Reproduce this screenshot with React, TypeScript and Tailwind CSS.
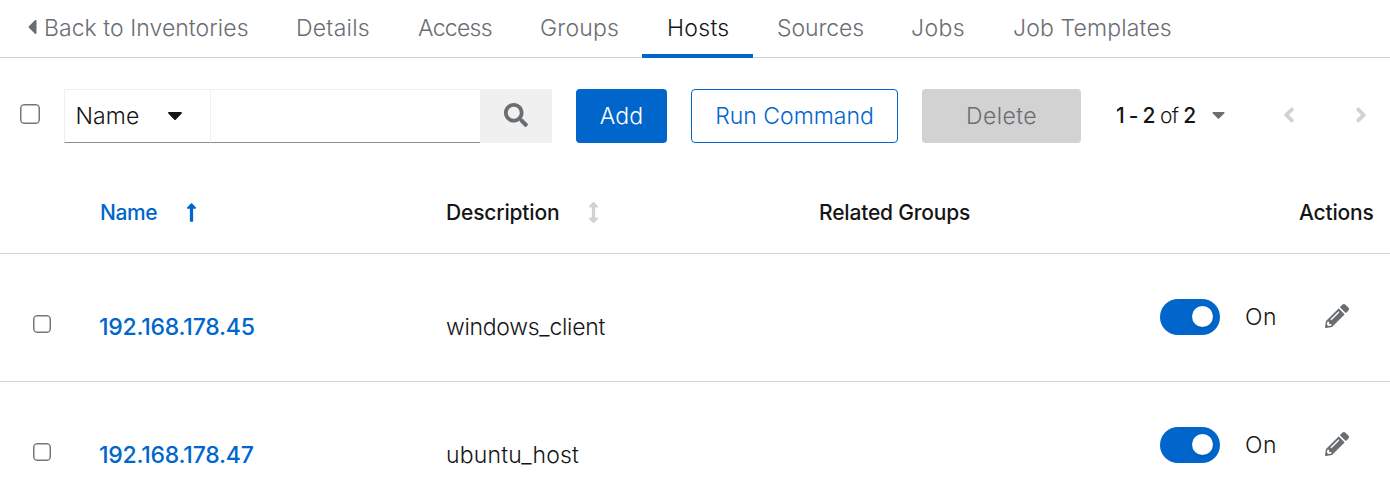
import { FaCaretLeft, FaCaretDown, FaSearch, FaLongArrowAltUp, FaArrowsAltV, FaAngleLeft, FaAngleRight, FaPencilAlt } from "react-icons/fa";

const tabs = [
  { label: "Details", box: "w-[122px] pl-6", text: "tracking-[0.25px]" },
  { label: "Access", box: "w-[123px] pl-6", text: "tracking-[-0.7px]" },
  { label: "Groups", box: "w-[125px] pl-[23px]", text: "tracking-[0.2px]" },
  { label: "Hosts", box: "w-[111px] pl-[25px]", text: "tracking-[0.3px]" },
  { label: "Sources", box: "w-[135px] pl-6", text: "tracking-[-0.1px]" },
  { label: "Jobs", box: "w-[101px] pl-[23px]", text: "tracking-[0.4px]" },
  { label: "Job Templates", box: "w-[207px] pl-6", text: "tracking-[0.15px]" },
];

const hosts = [
  { ip: "192.168.178.45", description: "windows_client", text: "tracking-[-0.28px]" },
  { ip: "192.168.178.47", description: "ubuntu_host", text: "tracking-[0.18px]" },
];

function Checkbox({ className }: { className: string }) {
  return (
    <input
      type="checkbox"
      className={`block shrink-0 appearance-none border border-[#767676] bg-white shadow-[inset_0_0_0_0.5px_#767676] ${className}`}
    />
  );
}

function Tabs() {
  return (
    <nav className="flex h-[58px] border-b border-[#d2d2d2] text-[23px] leading-[56px] text-[#6a6e73]">
      <button className="flex h-[58px] w-[272px] items-center pb-[2px] pl-[20px]">
        <FaCaretLeft className="mt-[-2px] size-6 shrink-0" />
        <span className="tracking-[0.05px]">Back to Inventories</span>
      </button>
      {tabs.map((t) => (
        <button
          key={t.label}
          className={`h-[58px] shrink-0 border-b-4 text-left whitespace-nowrap ${t.box} ${
            t.label === "Hosts" ? "border-[#0066cc] text-[#151515]" : "border-transparent"
          }`}
        >
          <span className={t.text}>{t.label}</span>
        </button>
      ))}
    </nav>
  );
}

function Toolbar() {
  return (
    <div className="mt-[31px] flex h-[54px] pl-5 text-[23px]">
      <Checkbox className="mt-[15px] size-5 rounded-[4px]" />
      <button className="ml-6 flex w-[147px] items-center border border-[#f0f0f0] border-b-[#8a8d90] pl-[10.5px]">
        <span className="w-[87.5px] text-left tracking-[0.1px]">Name</span>
        <FaCaretDown className="mt-[-2px] size-6" />
      </button>
      <input className="w-[269px] border-t border-b border-t-[#f0f0f0] border-b-[#8a8d90]" />
      <button className="flex w-[72px] items-center justify-center bg-[#f0f0f0] pb-[2px] text-[#6a6e73]">
        <FaSearch className="size-6" />
      </button>
      <button className="ml-6 w-[91px] rounded-[4px] bg-[#0066cc] tracking-[0.2px] text-white">
        Add
      </button>
      <button className="ml-6 w-[207px] rounded-[4px] border border-[#0066cc] text-[#0066cc]">
        Run Command
      </button>
      <button className="ml-6 w-[159px] rounded-[4px] bg-[#d2d2d2] tracking-[0.4px] text-[#6a6e73]">
        Delete
      </button>
      <div className="ml-[35px] flex w-[161px] items-center text-[21px]">
        <span className="w-[92px] tracking-[-0.75px] whitespace-nowrap">
          <b className="font-medium">1 - 2</b> of <b className="font-medium">2</b>
        </span>
        <FaCaretDown className="mt-[-3px] size-[21px] text-[#6a6e73]" />
      </div>
      <div className="flex items-center gap-[48px] pb-[2px] text-[#d2d2d2]">
        <FaAngleLeft className="size-6" />
        <FaAngleRight className="size-6" />
      </div>
    </div>
  );
}

function Switch() {
  return (
    <div className="mt-[-2px] flex h-9 w-[60px] items-center justify-end rounded-full bg-[#0066cc] pr-[7px]">
      <div className="size-[21px] rounded-full bg-white shadow-[0_2px_5px_rgba(3,3,3,0.12)]" />
    </div>
  );
}

export default function App() {
  return (
    <div className="h-[504px] w-[1390px] overflow-hidden bg-white font-['Inter',sans-serif] font-light text-[#151515]">
      <Tabs />
      <Toolbar />
      <div className="mt-[29px] flex h-[82px] items-center border-b border-[#d2d2d2] pl-[100px] text-[21px] font-medium tracking-[-0.18px]">
        <div className="flex w-[346px] items-center text-[#0066cc]">
          <span className="w-[81px] tracking-[-0.4px]">Name</span>
          <FaLongArrowAltUp className="size-[21px]" />
        </div>
        <div className="flex w-[373px] items-center">
          <span className="w-[137px]">Description</span>
          <FaArrowsAltV className="size-[21px] text-[#d2d2d2]" />
        </div>
        <span className="w-[480px]">Related Groups</span>
        <span>Actions</span>
      </div>
      {hosts.map((h) => (
        <div
          key={h.ip}
          className="flex h-32 items-center border-b border-[#d2d2d2] pl-[33px] text-[23px]"
        >
          <Checkbox className="mt-[13px] size-[18px] rounded-[4px]" />
          <a className="mt-[19px] ml-[48px] w-[347px] font-medium tracking-[-0.22px] text-[#0066cc]">
            {h.ip}
          </a>
          <span className={`mt-[19px] w-[714px] ${h.text}`}>{h.description}</span>
          <Switch />
          <span className="ml-[25px] w-[80px] tracking-[0.5px]">On</span>
          <FaPencilAlt className="mt-[-4px] size-6 text-[#6a6e73]" />
        </div>
      ))}
    </div>
  );
}
